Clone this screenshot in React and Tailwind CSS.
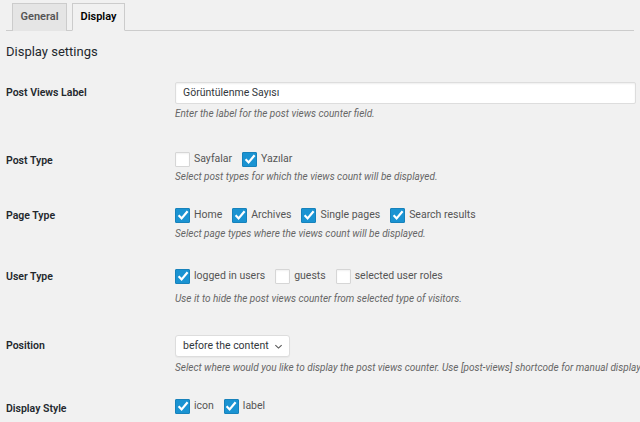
import React from "react";

const Check = ({ checked, label }) => (
  <label className="flex items-center mr-[10px]">
    {checked ? (
      <span className="w-[15px] h-[15px] bg-[#1a93d2] border border-[#1782bb] rounded-[1px] flex items-center justify-center">
        <svg width="12" height="12" viewBox="0 0 12 12">
          <path d="M1.6 6.2 L4.6 9.4 L10.6 2.2" fill="none" stroke="#fff" strokeWidth="2.2" />
        </svg>
      </span>
    ) : (
      <span className="w-[15px] h-[15px] bg-white border border-[#d6d6d6] rounded-[1px] shadow-[inset_0_1px_2px_rgba(0,0,0,0.06)]" />
    )}
    <span className="ml-[4px] text-[10.5px] leading-[16px] text-[#555]">{label}</span>
  </label>
);

const Desc = ({ children, className }) => (
  <p className={"text-[10px] leading-[16px] italic text-[#666] whitespace-nowrap " + className}>{children}</p>
);

const Row = ({ label, rowClass, labelClass, children }) => (
  <div className={"flex " + rowClass}>
    <div className={"w-[169px] shrink-0 text-[10.5px] leading-[16px] font-semibold text-[#23282d] " + labelClass}>
      {label}
    </div>
    <div className="flex-1 min-w-0">{children}</div>
  </div>
);

export default function App() {
  return (
    <div className="w-[640px] h-[422px] overflow-hidden bg-[#f1f1f1] px-[6px] font-['Roboto',sans-serif]">
      {/* tabs */}
      <div className="flex pt-[3px] pl-[6px] border-b border-[#ccc] h-[31px]">
        <div className="h-[28px] w-[55px] flex items-center justify-center bg-[#e5e5e5] border border-[#ccc] border-b-0 text-[11px] font-semibold text-[#555]">
          General
        </div>
        <div className="ml-[5px] h-[28px] w-[53px] flex items-center justify-center bg-[#f1f1f1] border border-[#ccc] border-b-[#f1f1f1] text-[11px] font-semibold text-black">
          Display
        </div>
      </div>

      <h2 className="mt-[11px] text-[13px] leading-[20px] text-[#23282d]">Display settings</h2>

      <Row label="Post Views Label" rowClass="mt-[20px]" labelClass="pt-[3px]">
        <div className="h-[22px] w-[461px] bg-white border border-[#ddd] rounded-[2px] shadow-[inset_0_1px_2px_rgba(0,0,0,0.07)] pl-[7px] flex items-center text-[10.5px] text-[#32373c]">
          Görüntülenme Sayısı
        </div>
        <Desc className="mt-[2px]">Enter the label for the post views counter field.</Desc>
      </Row>

      <Row label="Post Type" rowClass="mt-[29px]" labelClass="pt-[2px]">
        <div className="flex h-[16px] items-center">
          <Check label="Sayfalar" />
          <Check checked label="Yazılar" />
        </div>
        <Desc className="mt-[2px]">Select post types for which the views count will be displayed.</Desc>
      </Row>

      <Row label="Page Type" rowClass="mt-[22px]" labelClass="pt-[1px]">
        <div className="flex h-[16px] items-center">
          <Check checked label="Home" />
          <Check checked label="Archives" />
          <Check checked label="Single pages" />
          <Check checked label="Search results" />
        </div>
        <Desc className="mt-[3px]">Select page types where the views count will be displayed.</Desc>
      </Row>

      <Row label="User Type" rowClass="mt-[26px]" labelClass="pt-[1px]">
        <div className="flex h-[16px] items-center">
          <Check checked label="logged in users" />
          <Check label="guests" />
          <Check label="selected user roles" />
        </div>
        <Desc className="mt-[7px]">Use it to hide the post views counter from selected type of visitors.</Desc>
      </Row>

      <Row label="Position" rowClass="mt-[28px]" labelClass="pt-[3px]">
        <div className="h-[22px] w-[115px] bg-white border border-[#ddd] rounded-[3px] shadow-[0_1px_1px_rgba(0,0,0,0.04)] pl-[7px] pr-[6px] flex items-center justify-between text-[10.5px] text-[#32373c] whitespace-nowrap">
          <span>before the content</span>
          <svg width="9" height="9" viewBox="0 0 10 10">
            <path d="M1.5 3.5 L5 6.8 L8.5 3.5" fill="none" stroke="#555" strokeWidth="1.2" />
          </svg>
        </div>
        <Desc className="mt-[3px]">
          Select where would you like to display the post views counter. Use [post-views] shortcode for manual display.
        </Desc>
      </Row>

      <Row label="Display Style" rowClass="mt-[22px]" labelClass="pt-[3px]">
        <div className="flex h-[16px] items-center">
          <Check checked label="icon" />
          <Check checked label="label" />
        </div>
        <Desc className="mt-[6px]">Choose how to display the post views counter.</Desc>
      </Row>
    </div>
  );
}
